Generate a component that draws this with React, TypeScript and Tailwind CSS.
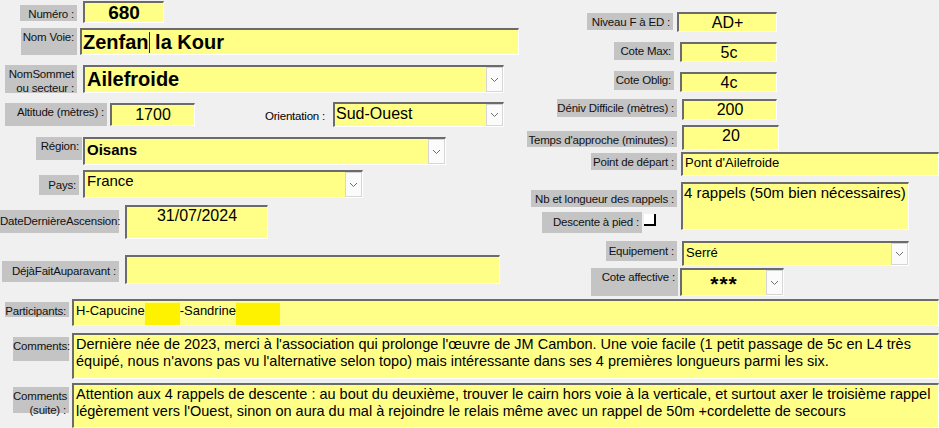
import type { ReactNode } from "react";

const fieldBase =
    "relative bg-[#ffff88] border-t-2 border-l-2 border-[#6b6b6b] border-b border-r border-b-white border-r-white text-black overflow-hidden";
const labelBase =
    "bg-[#c4c4c4] text-[11.5px] leading-[14px] text-[#111] text-right pr-[3px] pt-[2px] whitespace-nowrap tracking-[-0.2px]";

function Chevron() {
    return (
        <div className="absolute right-0 top-0 bottom-0 w-[17px] bg-[#fbfbfb] border border-[#d6d6d6] flex items-center justify-center">
            <svg width="9" height="6" viewBox="0 0 9 6">
                <path d="M1 1 L4.5 4.5 L8 1" fill="none" stroke="#6e6e6e" strokeWidth="1" />
            </svg>
        </div>
    );
}

function Label({ className, children }: { className: string; children: ReactNode }) {
    return <div className={labelBase + " " + className}>{children}</div>;
}

function Field({ className, children }: { className: string; children?: ReactNode }) {
    return <div className={fieldBase + " " + className}>{children}</div>;
}

export default function App() {
    return (
        <div className="w-[939px] h-[428px] overflow-hidden bg-[#f0f0f0] font-['Liberation_Sans',Arial,sans-serif]">
            <div className="flex h-[293px]">
                {/* colonne gauche */}
                <div className="w-[520px] shrink-0 flex flex-col">
                    <div className="flex items-start mt-[1px]">
                        <Label className="ml-[20px] mt-[4px] w-[57px] h-[16px] pt-[1px]">Numéro :</Label>
                        <Field className="ml-[6px] w-[81px] h-[22px] text-center text-[19px] font-bold leading-[20px]">680</Field>
                    </div>
                    <div className="flex items-start mt-[5px]">
                        <Label className="ml-[21px] w-[56px] h-[27px]">Nom Voie:</Label>
                        <Field className="ml-[3px] w-[439px] h-[27px] pl-[1px] text-[20px] font-bold leading-[24px]">
                            Zenfan<span className="inline-block w-px h-[21px] bg-[#1a1a7a] align-[-4px]" /> la Kour
                        </Field>
                    </div>
                    <div className="flex items-start mt-[10px]">
                        <Label className="ml-[5px] w-[72px] h-[28px] pt-[1px] leading-[13px]">
                            NomSommet
                            <br />
                            ou secteur :
                        </Label>
                        <Field className="ml-[6px] w-[421px] h-[28px] pl-[2px] text-[20px] font-bold leading-[24px]">
                            Ailefroide
                            <Chevron />
                        </Field>
                    </div>
                    <div className="flex items-start mt-[9px]">
                        <Label className="ml-[5px] mt-[1px] w-[102px] h-[23px]">Altitude (mètres) :</Label>
                        <Field className="ml-[3px] mt-[1px] w-[85px] h-[23px] text-center text-[16px] leading-[20px]">1700</Field>
                        <div className="ml-[70px] mt-[7px] w-[62px] text-[11.5px] leading-[14px] tracking-[-0.2px] whitespace-nowrap text-right pr-[2px]">Orientation :</div>
                        <Field className="ml-[6px] w-[171px] h-[25px] pl-[1px] text-[16px] leading-[20px]">
                            Sud-Ouest
                            <Chevron />
                        </Field>
                    </div>
                    <div className="flex items-start mt-[10px]">
                        <Label className="ml-[36px] w-[46px] h-[23px]">Région:</Label>
                        <Field className="ml-[1px] w-[363px] h-[28px] pl-[2px] pt-[2px] text-[15px] font-bold leading-[18px]">
                            Oisans
                            <Chevron />
                        </Field>
                    </div>
                    <div className="flex items-start mt-[5px]">
                        <Label className="ml-[39px] mt-[5px] w-[40px] h-[20px] pt-[3px]">Pays:</Label>
                        <Field className="ml-[4px] w-[280px] h-[28px] pl-[2px] text-[15px] leading-[18px]">
                            France
                            <Chevron />
                        </Field>
                    </div>
                    <div className="flex items-start mt-[7px]">
                        <Label className="mt-[5px] w-[119px] h-[23px] pt-[4px] pr-[2px]">DateDernièreAscension:</Label>
                        <Field className="ml-[6px] w-[143px] h-[34px] text-center text-[16px] leading-[18px]">31/07/2024</Field>
                    </div>
                    <div className="flex items-start mt-[16px]">
                        <Label className="ml-[2px] mt-[6px] w-[117px] h-[21px] pt-[3px]">DéjàFaitAuparavant :</Label>
                        <Field className="ml-[6px] w-[375px] h-[29px]" />
                    </div>
                </div>

                {/* colonne droite */}
                <div className="flex-1 flex flex-col">
                    <div className="flex items-start mt-[12px]">
                        <Label className="ml-[67px] mt-[1px] w-[86px] h-[17px] pt-[1px]">Niveau F à ED :</Label>
                        <Field className="ml-[4px] w-[100px] h-[20px] text-center text-[16px] leading-[18px]">AD+</Field>
                    </div>
                    <div className="flex items-start mt-[10px]">
                        <Label className="ml-[94px] w-[60px] h-[18px]">Cote Max:</Label>
                        <Field className="ml-[6px] w-[97px] h-[20px] text-center text-[16px] leading-[18px]">5c</Field>
                    </div>
                    <div className="flex items-start mt-[9px]">
                        <Label className="ml-[94px] w-[60px] h-[19px]">Cote Oblig:</Label>
                        <Field className="ml-[6px] mt-[1px] w-[97px] h-[20px] text-center text-[16px] leading-[18px]">4c</Field>
                    </div>
                    <div className="flex items-start mt-[7px]">
                        <Label className="ml-[37px] w-[120px] h-[18px] pt-[1px]">Déniv Difficile (mètres) :</Label>
                        <Field className="ml-[5px] w-[95px] h-[21px] text-center text-[16px] leading-[18px]">200</Field>
                    </div>
                    <div className="flex items-start mt-[5px]">
                        <Label className="ml-[7px] mt-[6px] w-[150px] h-[16px] pt-[1px]">Temps d'approche (minutes) :</Label>
                        <Field className="ml-[5px] w-[97px] h-[25px] text-center text-[16px] leading-[18px]">20</Field>
                    </div>
                    <div className="flex items-start mt-[2px]">
                        <Label className="ml-[71px] mt-[1px] w-[86px] h-[17px] pt-[1px]">Point de départ :</Label>
                        <Field className="ml-[4px] flex-1 h-[24px] pl-[2px] pt-[1px] text-[13px] leading-[16px]">Pont d'Ailefroide</Field>
                    </div>
                    <div className="flex items-start mt-[6px]">
                        <div className="w-[161px] flex flex-col">
                            <Label className="ml-[11px] mt-[8px] w-[146px] h-[17px] pt-[1px]">Nb et longueur des rappels :</Label>
                            <div className="flex items-start mt-[5px]">
                                <Label className="ml-[22px] w-[100px] h-[21px] pt-[3px]">Descente à pied :</Label>
                                <div className="ml-[2px] mt-[2px] w-[12px] h-[12px] bg-white border-r-2 border-b-2 border-black" />
                            </div>
                        </div>
                        <Field className="w-[228px] h-[48px] pl-[1px] text-[15px] leading-[18px]">4 rappels (50m bien nécessaires)</Field>
                    </div>
                    <div className="flex items-start mt-[8px]">
                        <Label className="ml-[86px] w-[71px] h-[20px] pt-[3px]">Equipement :</Label>
                        <Field className="ml-[5px] w-[227px] h-[25px] pl-[2px] pt-[2px] text-[13px] leading-[16px]">
                            Serré
                            <Chevron />
                        </Field>
                    </div>
                    <div className="flex items-start mt-[2px]">
                        <Label className="ml-[71px] w-[87px] h-[28px] pt-[2px]">Cote affective :</Label>
                        <Field className="ml-[2px] w-[104px] h-[28px] pr-[17px] pt-[3px] text-center text-[21px] font-bold leading-[22px] tracking-[1px]">
                            ***
                            <Chevron />
                        </Field>
                    </div>
                </div>
            </div>

            {/* bas du formulaire */}
            <div className="flex items-start mt-[6px]">
                <Label className="ml-[5px] mt-[3px] w-[64px] h-[15px] pt-[0px] pr-[1px]">Participants:</Label>
                <Field className="ml-[3px] flex-1 h-[27px] pl-[2px] pt-[2px] text-[13px] leading-[16px] flex items-start">
                    H-Capucine
                    <span className="inline-block w-[35px] h-[23px] bg-[#fff200]" />
                    -Sandrine
                    <span className="inline-block w-[44px] h-[23px] bg-[#fff200]" />
                </Field>
            </div>
            <div className="flex items-start mt-[7px]">
                <Label className="ml-[13px] mt-[4px] w-[56px] h-[24px] pt-[1px] pr-[1px]">Comments:</Label>
                <Field className="ml-[3px] flex-1 h-[46px] pl-[2px] pt-[1px] text-[14.5px] leading-[17px]">
                    Dernière née de 2023, merci à l'association qui prolonge l'œuvre de JM Cambon. Une voie facile (1 petit passage de 5c en L4 très équipé, nous n'avons pas vu l'alternative selon topo) mais intéressante dans ses 4 premières longueurs parmi les six.
                </Field>
            </div>
            <div className="flex items-start mt-[4px]">
                <Label className="ml-[13px] mt-[4px] w-[56px] h-[26px] pt-[0px] pr-[1px] leading-[13px]">
                    Comments
                    <br />
                    (suite) :
                </Label>
                <Field className="ml-[3px] flex-1 h-[45px] pl-[2px] pt-[1px] text-[14.5px] leading-[17px]">
                    Attention aux 4 rappels de descente : au bout du deuxième, trouver le cairn hors voie à la verticale, et surtout axer le troisième rappel légèrement vers l'Ouest, sinon on aura du mal à rejoindre le relais même avec un rappel de 50m +cordelette de secours
                </Field>
            </div>
        </div>
    );
}
